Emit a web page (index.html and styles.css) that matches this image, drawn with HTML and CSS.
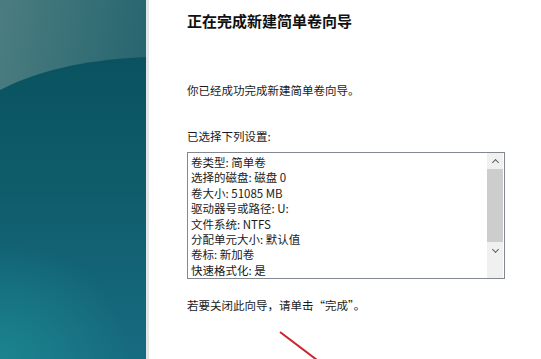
FILE: index.html
```html
<!DOCTYPE html>
<html lang="zh-CN">

<head>
    <meta charset="UTF-8">
    <meta name="viewport" content="width=device-width, initial-scale=1.0">
    <title>新建简单卷向导</title>
    <link rel="stylesheet" href="styles.css">
</head>

<body>
    <div class="sidePart">
        <svg class="sideArt" width="146" height="359" viewBox="0 0 146 359">
            <defs>
                <linearGradient id="topFill" x1="0" y1="0" x2="1" y2="0.4">
                    <stop offset="0" stop-color="#4b7d80" />
                    <stop offset="0.55" stop-color="#356f76" />
                    <stop offset="1" stop-color="#25636e" />
                </linearGradient>
                <linearGradient id="arcFill" x1="0" y1="0" x2="0" y2="1">
                    <stop offset="0" stop-color="#0a5260" />
                    <stop offset="0.45" stop-color="#0f5d6c" />
                    <stop offset="1" stop-color="#176b80" />
                </linearGradient>
                <radialGradient id="glow" cx="0" cy="1" r="0.9">
                    <stop offset="0" stop-color="#1c8a92" stop-opacity="0.8" />
                    <stop offset="1" stop-color="#1c8a92" stop-opacity="0" />
                </radialGradient>
            </defs>
            <rect width="146" height="359" fill="url(#topFill)" />
            <path d="M0 90 C35 72 80 60 146 57 L146 359 L0 359 Z" fill="url(#arcFill)" />
            <rect x="0" y="230" width="146" height="129" fill="url(#glow)" />
        </svg>
    </div>
    <div class="mainPart">
        <h1 class="titleText">正在完成新建简单卷向导</h1>
        <p class="doneText">你已经成功完成新建简单卷向导。</p>
        <p class="listLabel">已选择下列设置:</p>
        <div class="listBox">
            <div class="listLines">
                <p>卷类型: 简单卷</p>
                <p>选择的磁盘: 磁盘 0</p>
                <p>卷大小: 51085 MB</p>
                <p>驱动器号或路径: U:</p>
                <p>文件系统: NTFS</p>
                <p>分配单元大小: 默认值</p>
                <p>卷标: 新加卷</p>
                <p>快速格式化: 是</p>
            </div>
            <div class="scrollBar">
                <span class="arrowUp"></span>
                <span class="thumb"></span>
                <span class="arrowDown"></span>
            </div>
        </div>
        <p class="closeText">若要关闭此向导，请单击“完成”。</p>
    </div>
    <svg class="redArrow" width="541" height="359" viewBox="0 0 541 359">
        <line x1="280" y1="332" x2="317" y2="360" stroke="#c9232e" stroke-width="2" />
    </svg>
</body>

</html>
```

FILE: styles.css
```css
* {
    margin: 0;
    padding: 0;
    box-sizing: border-box;
}

body {
    display: flex;
    width: 541px;
    height: 359px;
    overflow: hidden;
    background-color: white;
    color: #1a1a1a;
    font-family: "Noto Sans CJK SC", "Liberation Sans", sans-serif;
    position: relative;
}

.sidePart {
    width: 149px;
    height: 100%;
    flex-shrink: 0;
    border-right: 3px solid #e2e6e6;
}

.sideArt {
    display: block;
}

.mainPart {
    flex: 1;
    padding-left: 38px;
    padding-top: 11px;
}

.titleText {
    font-size: 15px;
    line-height: 20px;
    font-weight: bold;
    color: #111;
}

.doneText {
    font-size: 11.5px;
    line-height: 16px;
    margin-top: 51px;
}

.listLabel {
    font-size: 11.5px;
    line-height: 16px;
    margin-top: 30px;
}

.listBox {
    display: flex;
    width: 318px;
    height: 127px;
    margin-top: 8px;
    border: 1px solid #828790;
    overflow: hidden;
}

.listLines {
    flex: 1;
    padding: 2px 3px;
    font-size: 11.5px;
    line-height: 15.4px;
}

.scrollBar {
    width: 16px;
    display: flex;
    flex-direction: column;
    background-color: #f0f0f0;
    margin-right: 1px;
}

.arrowUp,
.arrowDown {
    height: 16px;
    display: flex;
    align-items: center;
    justify-content: center;
}

.arrowUp::before,
.arrowDown::before {
    content: "";
    width: 4px;
    height: 4px;
    border-left: 1px solid #606060;
    border-top: 1px solid #606060;
}

.arrowUp::before {
    transform: translateY(1px) rotate(45deg);
}

.arrowDown::before {
    transform: translateY(-1px) rotate(225deg);
}

.thumb {
    height: 73px;
    background-color: #cdcdcd;
}

.closeText {
    font-size: 11.5px;
    line-height: 16px;
    margin-top: 18px;
}

.redArrow {
    position: absolute;
    left: 0;
    top: 0;
}
```
